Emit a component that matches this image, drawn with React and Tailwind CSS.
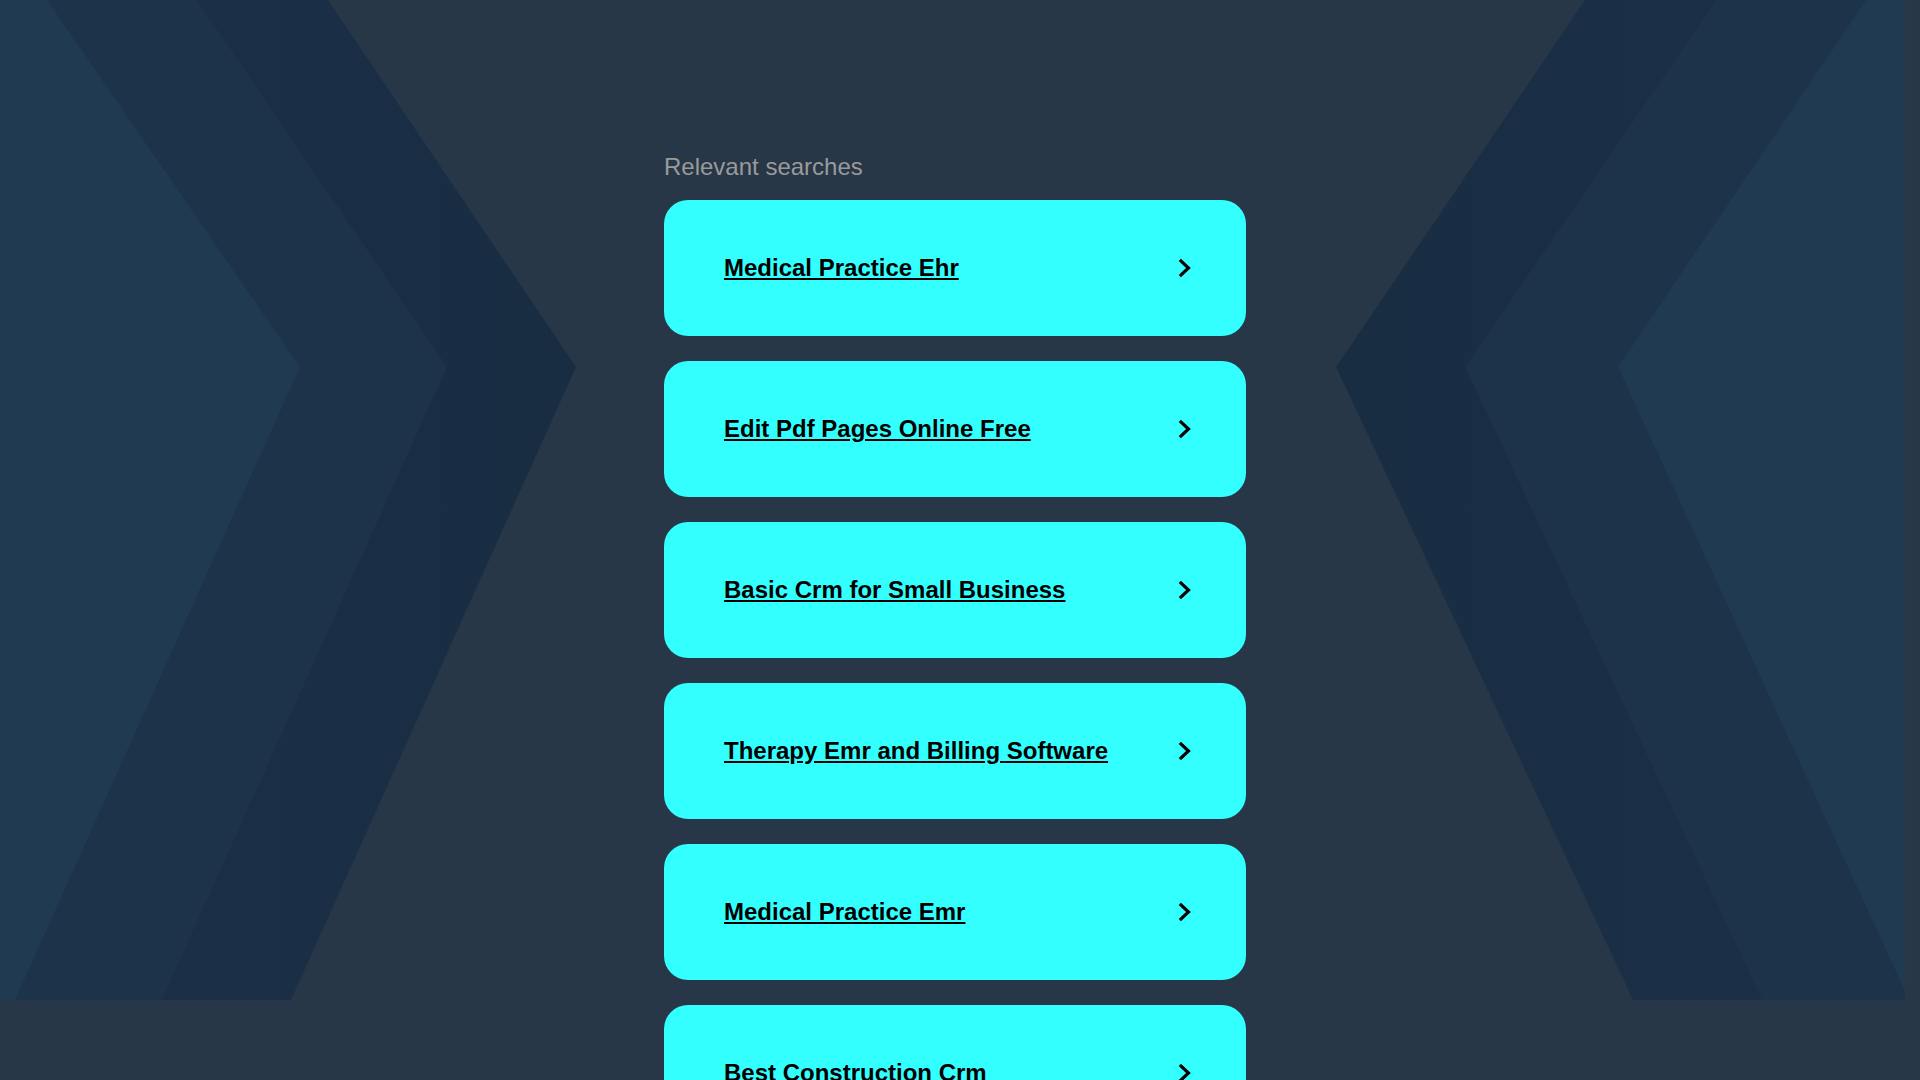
import React from 'react';

const searches = [
  'Medical Practice Ehr',
  'Edit Pdf Pages Online Free',
  'Basic Crm for Small Business',
  'Therapy Emr and Billing Software',
  'Medical Practice Emr',
  'Best Construction Crm',
];

const Backdrop = () => (
  <svg
    className="absolute top-0 left-0 w-[1905px] h-[1000px]"
    viewBox="0 0 1905 1000"
    preserveAspectRatio="none"
  >
    <defs>
      <linearGradient id="outerL" x1="0" y1="0" x2="1" y2="0">
        <stop offset="0" stopColor="#1c3148" />
        <stop offset="1" stopColor="#182d42" />
      </linearGradient>
      <linearGradient id="outerR" x1="1" y1="0" x2="0" y2="0">
        <stop offset="0" stopColor="#1c3148" />
        <stop offset="1" stopColor="#182d42" />
      </linearGradient>
    </defs>
    {/* left chevrons */}
    <polygon points="0,0 328,0 576,367 291,1000 0,1000" fill="url(#outerL)" />
    <polygon points="0,0 197,0 447,367 162,1000 0,1000" fill="#1d334a" />
    <polygon points="0,0 47,0 300,367 15,1000 0,1000" fill="#203a51" />
    {/* right chevrons */}
    <polygon points="1905,0 1585,0 1336,367 1633,1000 1905,1000" fill="url(#outerR)" />
    <polygon points="1905,0 1716,0 1465,367 1762,1000 1905,1000" fill="#1d334a" />
    <polygon points="1905,0 1866,0 1618,367 1909,1000 1905,1000" fill="#203a51" />
  </svg>
);

const Chevron = () => (
  <svg width="13" height="20" viewBox="0 0 13 20" className="shrink-0">
    <polyline points="1.8,1.8 10.5,10 1.8,18.2" fill="none" stroke="#000" strokeWidth="3.2" />
  </svg>
);

export default function App() {
  return (
    <div className="relative min-h-screen bg-[#273747] font-['Liberation_Sans',Arial,sans-serif]">
      <Backdrop />
      <div className="relative pr-[10px]">
        <div className="w-[582px] mx-auto pt-[153px] pb-[260px]">
          <h2 className="text-[24px] leading-[28px] text-[#9a9a9a] mb-[19px]">Relevant searches</h2>
          <div className="flex flex-col gap-[25px]">
            {searches.map((s) => (
              <a
                key={s}
                href="#"
                className="flex items-center justify-between h-[136px] rounded-[24px] bg-[#33ffff] pl-[60px] pr-[55px]"
              >
                <span className="text-[24px] font-bold text-black underline">{s}</span>
                <Chevron />
              </a>
            ))}
          </div>
        </div>
      </div>
    </div>
  );
}
